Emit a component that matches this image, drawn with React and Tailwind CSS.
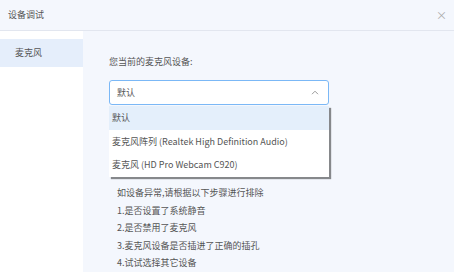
import React from "react";

const devices = [
  "默认",
  "麦克风阵列 (Realtek High Definition Audio)",
  "麦克风 (HD Pro Webcam C920)",
];

const tips = [
  "如设备异常,请根据以下步骤进行排除",
  "1.是否设置了系统静音",
  "2.是否禁用了麦克风",
  "3.麦克风设备是否插进了正确的插孔",
  "4.试试选择其它设备",
];

export default function App() {
  return (
    <div
      className="flex h-[272px] w-[454px] flex-col overflow-hidden bg-[#f4f7fd] text-[9px] text-[#555]"
      style={{ fontFamily: '"Noto Sans CJK SC", "Noto Sans", sans-serif' }}
    >
      {/* header */}
      <div className="flex h-[31px] shrink-0 items-center justify-between border-b border-[#e2e6ef] pl-[8px] pr-[7px]">
        <span className="text-[#555]">设备调试</span>
        <span className="text-[11px] leading-none text-[#aaa]">×</span>
      </div>

      <div className="flex flex-1">
        {/* sidebar */}
        <div className="w-[83px] shrink-0 bg-white pt-[8px]">
          <div className="flex h-[28px] items-center bg-[#e5eefb] pl-[15px]">麦克风</div>
        </div>

        {/* content */}
        <div className="flex-1 pl-[26px] pt-[25px]">
          <div className="leading-[12px]">您当前的麦克风设备:</div>

          <div className="relative mt-[12px] w-[220px]">
            <div className="flex h-[25px] items-center justify-between rounded-[3px] border border-[#7bb8f6] bg-white pl-[7px] pr-[9px]">
              <span>默认</span>
              <svg width="8" height="5" viewBox="0 0 8 5" fill="none">
                <path d="M1 4.2L4 1.2L7 4.2" stroke="#999" strokeWidth="1" />
              </svg>
            </div>

            <div className="absolute left-0 top-[26px] z-10 w-[220px] bg-white shadow-[2px_2px_1px_rgba(0,0,0,0.45)]">
              {devices.map((d, i) => (
                <div
                  key={d}
                  className={`flex h-[23.5px] items-center pl-[3px] ${i === 0 ? "bg-[#e4effb]" : ""}`}
                >
                  {d}
                </div>
              ))}
            </div>
          </div>

          <div className="mt-[79px] pl-[8px]">
            {tips.map((t) => (
              <div key={t} className="leading-[17.5px]">
                {t}
              </div>
            ))}
          </div>
        </div>
      </div>
    </div>
  );
}
